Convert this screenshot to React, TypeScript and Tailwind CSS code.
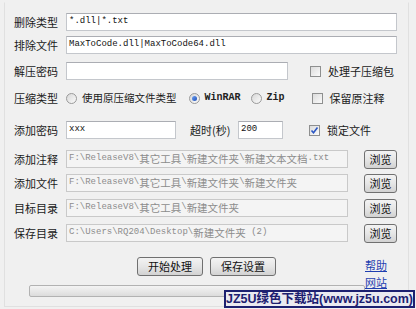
import React from 'react';

const cjk = "font-['Noto_Sans_CJK_SC','Noto_Sans_CJK_JP',sans-serif]";

const Mixed: React.FC<{ text: string }> = ({ text }) => {
  const parts = text.split(/([\u3000-\u9fff\uff00-\uffef]+)/).filter(Boolean);
  return (
    <>
      {parts.map((p, i) =>
        /[\u3000-\u9fff\uff00-\uffef]/.test(p) ? (
          <span key={i} className={`${cjk} text-[10.5px]`}>{p}</span>
        ) : (
          <span key={i} className="font-['Liberation_Mono',monospace] text-[9px] whitespace-pre">{p}</span>
        )
      )}
    </>
  );
};

const Label: React.FC<{ children: React.ReactNode }> = ({ children }) => (
  <div className={`w-[52px] shrink-0 ${cjk} text-[11px] leading-none text-[#1a1a1a]`}>{children}</div>
);

const TextBox: React.FC<{ w: string; disabled?: boolean; text?: string }> = ({ w, disabled, text }) => (
  <div
    className={`${w} h-[18px] shrink-0 flex items-center pl-[2px] overflow-hidden whitespace-nowrap border ${
      disabled ? 'bg-[#f4f4f4] border-[#c9c9c9] text-[#8c8c8c]' : 'bg-white border-[#c4c7cc] border-t-[#abadb3] text-[#111]'
    }`}
  >
    {text && <Mixed text={text} />}
  </div>
);

const Check: React.FC<{ checked?: boolean; label: string }> = ({ checked, label }) => (
  <div className="flex items-center gap-[7px]">
    <div className="w-[11px] h-[11px] border border-[#8e8f8f] bg-gradient-to-br from-[#dcdcdc] to-[#fafafa] flex items-center justify-center">
      {checked && (
        <svg width="9" height="9" viewBox="0 0 9 9">
          <path d="M1.5 4.5 L3.5 6.8 L7.5 1.5" stroke="#2b57c4" strokeWidth="1.6" fill="none" />
        </svg>
      )}
    </div>
    <span className={`${cjk} text-[11px] leading-none text-[#1a1a1a]`}>{label}</span>
  </div>
);

const Radio: React.FC<{ checked?: boolean; children: React.ReactNode }> = ({ checked, children }) => (
  <div className="flex items-center gap-[5px]">
    <div className="w-[11px] h-[11px] rounded-full border border-[#9a9a9a] bg-gradient-to-br from-[#d8d8d8] to-[#fbfbfb] flex items-center justify-center">
      {checked && <div className="w-[5px] h-[5px] rounded-full bg-gradient-to-br from-[#6fa0f0] to-[#1f4fb8]" />}
    </div>
    {children}
  </div>
);

const Btn: React.FC<{ w: string; children: React.ReactNode }> = ({ w, children }) => (
  <div
    className={`${w} h-[19px] shrink-0 rounded-[3px] border border-[#707070] bg-gradient-to-b from-[#f3f3f3] via-[#e6e6e6] to-[#d2d2d2] flex items-center justify-center ${cjk} text-[11px] leading-none text-[#111]`}
  >
    {children}
  </div>
);

export default function App() {
  return (
    <div className="relative w-[416px] h-[309px] bg-[#f0f0f0] overflow-hidden pl-[4px] pt-[2px]">
      <div className="w-[405px] h-[305px] border border-[#e0e0e0] border-t-transparent pl-[9px] pt-[10px]">
        <div className="flex items-center h-[18px]">
          <Label>删除类型</Label>
          <TextBox w="w-[331px]" text="*.dll|*.txt" />
        </div>
        <div className="flex items-center h-[18px] mt-[5px]">
          <Label>排除文件</Label>
          <TextBox w="w-[331px]" text="MaxToCode.dll|MaxToCode64.dll" />
        </div>
        <div className="flex items-center h-[18px] mt-[8px]">
          <Label>解压密码</Label>
          <TextBox w="w-[222px]" />
          <div className="ml-[22px]">
            <Check label="处理子压缩包" />
          </div>
        </div>
        <div className="flex items-center mt-[9px] h-[18px]">
          <Label>压缩类型</Label>
          <Radio>
            <span className={`${cjk} text-[10.5px] leading-none text-[#1a1a1a]`}>使用原压缩文件类型</span>
          </Radio>
          <div className="ml-[12px]">
            <Radio checked>
              <span className="font-['Liberation_Mono',monospace] font-bold text-[10px] leading-none text-[#222]">WinRAR</span>
            </Radio>
          </div>
          <div className="ml-[10px]">
            <Radio>
              <span className="font-['Liberation_Mono',monospace] font-bold text-[10px] leading-none text-[#222]">Zip</span>
            </Radio>
          </div>
          <div className="ml-[27px]">
            <Check label="保留原注释" />
          </div>
        </div>
        <div className="flex items-center h-[18px] mt-[14px]">
          <Label>添加密码</Label>
          <TextBox w="w-[110px]" text="xxx" />
          <div className={`ml-[14px] w-[48px] ${cjk} text-[11px] leading-none text-[#1a1a1a]`}>超时(秒)</div>
          <TextBox w="w-[45px]" text="200" />
          <div className="ml-[26px]">
            <Check checked label="锁定文件" />
          </div>
        </div>
        {[
          ['添加注释', 'F:\\ReleaseV8\\其它工具\\新建文件夹\\新建文本文档.txt', 'mt-[11px]'],
          ['添加文件', 'F:\\ReleaseV8\\其它工具\\新建文件夹\\新建文件夹', 'mt-[6px]'],
          ['目标目录', 'F:\\ReleaseV8\\其它工具\\新建文件夹', 'mt-[7px]'],
          ['保存目录', 'C:\\Users\\RQ204\\Desktop\\新建文件夹 (2)', 'mt-[7px]'],
        ].map(([label, path, mt]) => (
          <div key={label} className={`flex items-center h-[18px] ${mt}`}>
            <Label>{label}</Label>
            <TextBox w="w-[282px]" disabled text={path} />
            <div className="ml-[16px]">
              <Btn w="w-[33px]">浏览</Btn>
            </div>
          </div>
        ))}
        <div className="flex items-start mt-[15px]">
          <div className="ml-[123px]">
            <Btn w="w-[66px]">开始处理</Btn>
          </div>
          <div className="ml-[7px]">
            <Btn w="w-[66px]">保存设置</Btn>
          </div>
          <div className={`ml-[89px] mt-[3px] flex flex-col gap-[6px] ${cjk} text-[11px] leading-none text-[#1f3fb0] underline`}>
            <span>帮助</span>
            <span>网站</span>
          </div>
        </div>
        <div className="ml-[15px] -mt-[3px] w-[336px] h-[12px] border border-[#b2b2b2] rounded-[2px] bg-gradient-to-b from-[#f4f4f4] to-[#dcdcdc]" />
      </div>
      <div className="absolute left-[224px] top-[290px] w-[191px] h-[18px] border-2 border-[#1c2070] bg-[#e9eaf0] flex items-center justify-center">
        <span className={`font-['Liberation_Sans','Noto_Sans_CJK_SC',sans-serif] font-bold text-[12.5px] leading-none text-[#1c2070] whitespace-nowrap`}>
          JZ5U绿色下载站(www.jz5u.com)
        </span>
      </div>
    </div>
  );
}
